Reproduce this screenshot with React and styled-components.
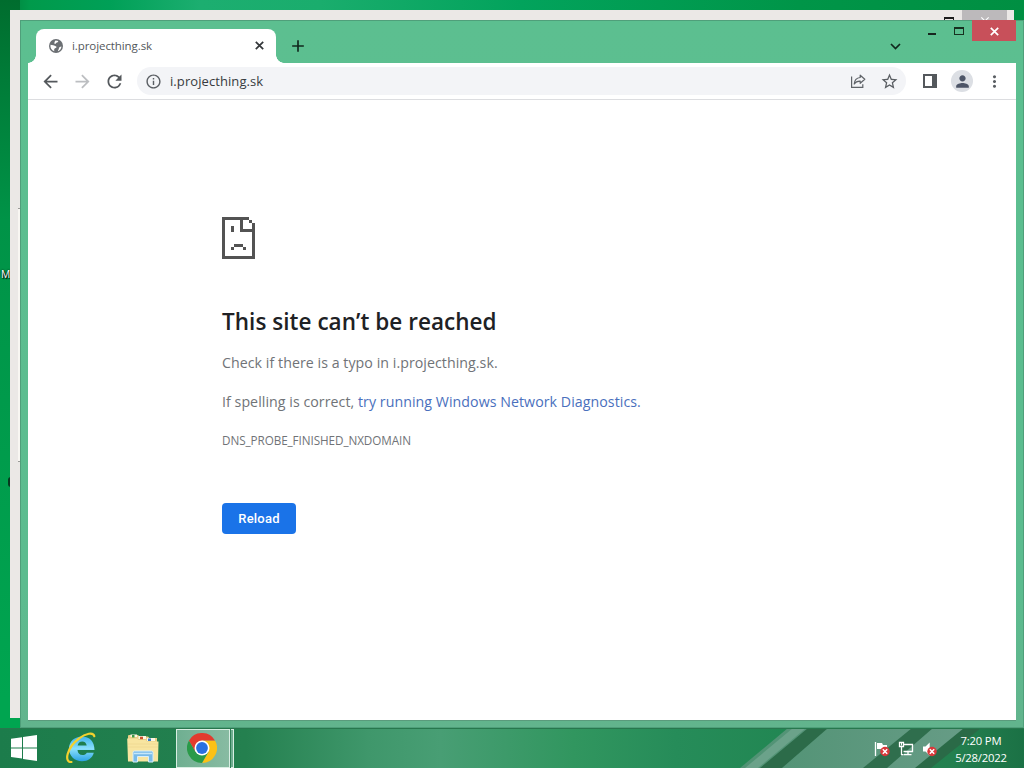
import React from "react";
import styled, { createGlobalStyle } from "styled-components";
import {
  MdAdd,
  MdArrowBack,
  MdArrowForward,
  MdClose,
  MdExpandMore,
  MdInfoOutline,
  MdMoreVert,
  MdPerson,
  MdRefresh,
  MdStarBorder,
} from "react-icons/md";

export default function App() {
  return (
    <Desktop>
      <GlobalStyle />
      <WorkArea>
        <IconLabel>M</IconLabel>
        <IconSpeck />
        <BackWindow>
          <BackMaximize />
          <BackClose>
            <MdClose size={14} />
          </BackClose>
          <BackEdge />
        </BackWindow>
        <BrowserWindow>
          <TitleBar>
            <Tab>
              <GlobeIcon />
              <TabTitle>i.projecthing.sk</TabTitle>
              <CloseIcon color="#33373a" />
            </Tab>
            <NewTab>
              <MdAdd size={20} />
            </NewTab>
            <TabSearch>
              <svg width="11" height="7" viewBox="0 0 11 7" fill="none">
                <path d="M1 1l4.500 4.500L10 1" stroke="#10281d" strokeWidth="1.700" />
              </svg>
            </TabSearch>
            <Caption>
              <Minimize />
              <Maximize />
              <CloseButton>
                <CloseIcon color="#fff" />
              </CloseButton>
            </Caption>
          </TitleBar>
          <Page>
            <Toolbar />
            <ErrorPage />
          </Page>
        </BrowserWindow>
      </WorkArea>
      <Taskbar />
    </Desktop>
  );
}

function CloseIcon({ color }) {
  return (
    <svg width="9" height="9" viewBox="0 0 9 9">
      <path d="M.8 .8l7.400 7.400M8.200 .8L.8 8.200" stroke={color} strokeWidth="1.700" />
    </svg>
  );
}

function GlobeIcon() {
  return (
    <svg width="14" height="14" viewBox="0 0 14 14">
      <circle cx="7" cy="7" r="7" fill="#6b6f73" />
      <path d="M1.500 5.800C3 6.300 5.500 6 7.200 7.600c.8.800-.2 1.600-1.400 1.900-.8.300-.6 1.400-.5 2.700C2.500 11.300 1 8.800 1.500 5.800z" fill="#fff" />
      <path d="M6.500 1.400c1 .2 2 .2 2.800.5-.2 1.200-1 1.400-1.900 1.900-.6.400-.6 1.200-1.500 1.100C5 4.700 5.300 2.600 6.500 1.400z" fill="#fff" />
      <path d="M12.500 7.500c-.3 2.300-1.500 4-3.600 4.700.1-1.300 1-1.600 1-2.600 0-1.200.8-2 2.600-2.100z" fill="#fff" />
    </svg>
  );
}

function Toolbar() {
  return (
    <ToolbarRow>
      <NavButton>
        <MdArrowBack size={21} />
      </NavButton>
      <NavButton $disabled>
        <MdArrowForward size={21} />
      </NavButton>
      <NavButton>
        <MdRefresh size={21} />
      </NavButton>
      <Omnibox>
        <MdInfoOutline size={17} color="#5a5e63" />
        <Url>i.projecthing.sk</Url>
        <ShareIcon />
        <MdStarBorder size={19} color="#5a5e63" />
      </Omnibox>
      <SidePanel />
      <Avatar>
        <MdPerson size={19} color="#4d5567" />
      </Avatar>
      <MdMoreVert size={19} color="#5a5e63" />
    </ToolbarRow>
  );
}

function ShareIcon() {
  return (
    <svg width="16" height="16" viewBox="0 0 16 16" fill="none" stroke="#5f6368" strokeWidth="1.200">
      <path d="M1.600 3.500v10.900h11.200v-3.200" />
      <path d="M10.200 2.200l4.600 4.100-4.600 4V8.100C7.600 8 5.500 8.900 4.200 11c.3-3.700 2.500-6.100 6-6.500z" strokeLinejoin="round" />
    </svg>
  );
}

function ErrorPage() {
  return (
    <ErrorBody>
      <SadPage />
      <Heading>This site can’t be reached</Heading>
      <Message>Check if there is a typo in i.projecthing.sk.</Message>
      <Message $gap={15}>
        If spelling is correct, <Link>try running Windows Network Diagnostics.</Link>
      </Message>
      <ErrorCode>DNS_PROBE_FINISHED_NXDOMAIN</ErrorCode>
      <Reload>Reload</Reload>
    </ErrorBody>
  );
}

function SadPage() {
  return (
    <svg width="33" height="42" viewBox="0 0 11 14" shapeRendering="crispEdges" fill="#535353">
      <path d="M0 0h9v1H7v3h4v10H0zM1 1v12h9V5H6V1z" fillRule="evenodd" />
      <path d="M9 1h1v1H9zM10 2h1v3h-1zM3 3h1v2H3zM4 9h3v1H4zM3 10h1v1H3zM7 10h1v1H7z" />
    </svg>
  );
}

function Taskbar() {
  return (
    <Bar>
      <BarBackdrop />
      <TaskItems>
        <StartSlot>
          <WindowsLogo />
        </StartSlot>
        <Slot>
          <ExplorerE />
        </Slot>
        <Slot>
          <Folder />
        </Slot>
        <ActiveSlot>
          <ChromeLogo />
        </ActiveSlot>
        <StackGap />
        <StackEdge />
      </TaskItems>
      <Tray>
        <FlagIcon />
        <NetworkIcon />
        <SpeakerIcon />
        <Clock>
          <ClockLine>7:20 PM</ClockLine>
          <ClockLine>5/28/2022</ClockLine>
        </Clock>
      </Tray>
    </Bar>
  );
}

function BarBackdrop() {
  return (
    <Backdrop width="1024" height="40" viewBox="0 0 1024 40">
      <defs>
        <linearGradient id="bar">
          <stop offset="0" stopColor="#1c7c4b" />
          <stop offset=".24" stopColor="#24804f" />
          <stop offset=".36" stopColor="#3f976b" />
          <stop offset=".43" stopColor="#489e74" />
          <stop offset=".56" stopColor="#31965f" />
          <stop offset=".66" stopColor="#268c59" />
          <stop offset=".78" stopColor="#218652" />
          <stop offset=".93" stopColor="#23804f" />
          <stop offset="1" stopColor="#1b7145" />
        </linearGradient>
        <linearGradient id="glass">
          <stop offset="0" stopColor="#4f9273" />
          <stop offset="1" stopColor="#679c86" />
        </linearGradient>
      </defs>
      <path d="M0 0h1024v40H0z" fill="url(#bar)" />
      <path d="M788 0h180l-48 40H740z" fill="url(#glass)" />
      <path d="M793 0h13l-48 40h-13z" fill="#6ba28a" />
      <path d="M808 0h20l-46 40h-22z" fill="#2c6b49" />
      <path d="M912 0h21l-46 40h-24z" fill="#2f6e4d" />
      <path d="M964 0h17l-50 40h-16z" fill="#2a6a47" />
      <path d="M0 .5h1024" stroke="#27774d" />
    </Backdrop>
  );
}

function WindowsLogo() {
  return (
    <svg width="26" height="26" viewBox="0 0 26 26" fill="#fff">
      <path d="M0 3.700L11 2.200v10.200H0zM12 2L26 0v12.400H12zM0 13.400h11v10.200L0 22zM12 13.400h14V26l-14-2.100z" />
    </svg>
  );
}

function ExplorerE() {
  return (
    <svg width="32" height="32" viewBox="0 0 32 32">
      <defs>
        <linearGradient id="ie" x1="0" y1="0" x2="0" y2="1">
          <stop offset="0" stopColor="#3fb4ec" />
          <stop offset=".5" stopColor="#8be0fb" />
          <stop offset="1" stopColor="#2ba3e4" />
        </linearGradient>
      </defs>
      <path
        d="M17 4.500c7.500 0 12.500 5 12.500 13.500H12.500c.3 3.200 2.200 5 5 5 2 0 3.500-.8 4.300-2.300h7c-1.600 5.500-5.700 8.500-11.800 8.500C9.500 29.200 4 24.300 4 16.600 4 9.400 9.700 4.500 17 4.500zM12.600 13.600h9.100c-.3-2.700-2-4.200-4.500-4.200s-4.200 1.500-4.600 4.200z"
        fill="url(#ie)"
      />
      <path
        d="M6.500 30C-1.500 30.500 2 15.500 14 6.500 20.500 1.200 28.500-.2 29.300 4.200"
        fill="none"
        stroke="#f3d12d"
        strokeWidth="2.200"
        strokeLinecap="round"
      />
    </svg>
  );
}

function Folder() {
  return (
    <svg width="34" height="30" viewBox="0 0 34 30">
      <path d="M2 3Q2 2 3 2h9l1.500 1.500H22L23.500 5H31v4H2z" fill="#e9cf86" />
      <path d="M4.500 1.500H11V4H4.500zM12.500 3H20v3h-7.500zM21 5h8v3h-8z" fill="#fbf6e4" />
      <path d="M6 2h2.500v2.500H6z" fill="#3e9a44" />
      <path d="M14 3.700h3v2.500h-3z" fill="#c8502e" />
      <path d="M22 5.500h3V8h-3z" fill="#397fc8" />
      <path d="M1.200 5.500h10l1.500 1.500h7L21 8.500h11.500L32 28.500H2z" fill="#f8e5a0" />
      <path d="M2 11h30M2 14h30" stroke="#f0da93" />
      <path d="M7 29v-9.500Q7 18 8.500 18h17q1.500 0 1.500 1.500V29h-4.500v-5.500h-11V29z" fill="#79bbe8" stroke="#d9effa" />
      <path d="M8 20.500h18" stroke="#c6e7fa" strokeWidth="1.500" />
    </svg>
  );
}

function ChromeLogo() {
  return (
    <svg width="30" height="30" viewBox="0 0 30 30">
      <path d="M15 7.500h13A15 15 0 0 1 15 30l6.500-11.250z" fill="#fbc116" />
      <path d="M2 7.500L8.500 18.750h13L15 30A15 15 0 0 1 2 7.500z" fill="#2a9a49" />
      <path d="M15 7.500h13a15 15 0 0 0-26 0l6.500 11.250z" fill="#e23b2e" />
      <circle cx="15" cy="15" r="7.500" fill="#fff" />
      <circle cx="15" cy="15" r="5.900" fill="#2a70e0" />
    </svg>
  );
}

function ErrorBadge({ x, y }) {
  return (
    <g transform={`translate(${x} ${y})`}>
      <circle r="4.700" fill="#d9383a" />
      <path d="M-2.200-2.200l4.400 4.400M2.200-2.200l-4.400 4.400" stroke="#fff" strokeWidth="1.500" />
    </g>
  );
}

function FlagIcon() {
  return (
    <svg width="16" height="16" viewBox="0 0 16 16">
      <path d="M1.500 1v14" stroke="#fff" strokeWidth="1.300" />
      <path d="M3 2h5l1 2h4v5.500H8L7 8H3z" fill="#fff" />
      <ErrorBadge x={11} y={10.500} />
    </svg>
  );
}

function NetworkIcon() {
  return (
    <svg width="16" height="16" viewBox="0 0 16 16" fill="none" stroke="#fff" strokeWidth="1.300">
      <path d="M5.500 3.500h9v7h-9M10 10.500v3M6 13.700h7.500" />
      <path d="M1.500 1.500h4v4h-4zM3.500 5.500v8.200h2" />
      <path d="M3.500 1.500v3" strokeWidth="1" />
    </svg>
  );
}

function SpeakerIcon() {
  return (
    <svg width="16" height="16" viewBox="0 0 16 16">
      <path d="M1 5.500h2.500L7.700 1.500v13L3.500 10.500H1z" fill="#fff" />
      <ErrorBadge x={10} y={10.500} />
    </svg>
  );
}

const GlobalStyle = createGlobalStyle`
  body {
    margin: 0;
    overflow: hidden;
  }
`;

const Desktop = styled.div`
  width: 1024px;
  height: 768px;
  display: flex;
  flex-direction: column;
  overflow: hidden;
  font-family: "Open Sans", "Noto Sans", sans-serif;
  background: linear-gradient(90deg, #007a38 0, #009a4b 30px, #00a057 110px, #1cae70 200px, #1aad6d 320px, #02a35c 520px, #009548 800px, #008f42 1024px);
`;

const WorkArea = styled.div`
  position: relative;
  flex: 1;
`;

const IconLabel = styled.span`
  position: absolute;
  left: 0;
  top: 0;
  height: 728px;
  width: 20px;
  box-sizing: border-box;
  padding: 266px 0 0 1px;
  font-size: 10.300px;
  line-height: 16px;
  color: #fff;
  text-shadow: 1px 1px 1px #000, 0 0 2px #000;
  background: linear-gradient(#006d2e 0, #007c38 80px, #009347 220px, #009a4b 400px, #00a550 698px);
`;

const IconSpeck = styled.div`
  position: absolute;
  left: 8px;
  top: 477px;
  width: 3px;
  height: 10px;
  border-radius: 3px 0 0 3px;
  background: #07391f;
`;

const BackWindow = styled.div`
  position: absolute;
  left: 10px;
  top: 10px;
  width: 1004px;
  height: 708px;
  background: #ebe8e6;
`;

const BackMaximize = styled.div`
  position: absolute;
  left: 934px;
  top: 7px;
  width: 10px;
  height: 8px;
  box-sizing: border-box;
  border: 1px solid #1d1d1d;
  border-top-width: 2px;
`;

const BackClose = styled.div`
  position: absolute;
  left: 952px;
  top: 0;
  width: 45px;
  height: 21px;
  display: flex;
  align-items: center;
  justify-content: center;
  color: #fff;
  background: #bcb9bb;
`;

const BackEdge = styled.div`
  position: absolute;
  left: 8px;
  top: 198px;
  width: 2px;
  height: 252px;
  border: solid #9b9b98;
  border-width: 1px 0;
  background: #f8f6f2;
`;

const BrowserWindow = styled.div`
  position: absolute;
  left: 20px;
  top: 20px;
  width: 1004px;
  height: 708px;
  box-sizing: border-box;
  display: flex;
  flex-direction: column;
  padding: 0 8px 8px;
  background: linear-gradient(#5cbf90 0, #5cbc8f 80%, #62b48d 100%);
  box-shadow: inset 1px 1px 0 #4f9f7a, inset -1px -1px 0 #4f9f7a;
`;

const TitleBar = styled.div`
  height: 43px;
  flex: none;
  display: flex;
  padding-left: 8px;
`;

const Tab = styled.div`
  position: relative;
  width: 240px;
  height: 34px;
  margin-top: 9px;
  box-sizing: border-box;
  display: flex;
  align-items: center;
  padding: 0 12px 1px 13px;
  border-radius: 8px 8px 0 0;
  background: #fff;

  &::before,
  &::after {
    content: "";
    position: absolute;
    bottom: 0;
    width: 8px;
    height: 8px;
  }
  &::before {
    left: -8px;
    background: radial-gradient(circle at 0 0, transparent 7.500px, #fff 8px);
  }
  &::after {
    right: -8px;
    background: radial-gradient(circle at 100% 0, transparent 7.500px, #fff 8px);
  }
`;

const TabTitle = styled.span`
  flex: 1;
  margin-left: 9px;
  font-size: 11.500px;
  letter-spacing: -0.080px;
  color: #53575b;
`;

const NewTab = styled.div`
  display: flex;
  align-items: center;
  margin: 9px 0 0 12px;
  color: #10281d;
`;

const TabSearch = styled.div`
  display: flex;
  align-items: center;
  margin: 9px 27px 0 auto;
`;

const Caption = styled.div`
  display: flex;
  align-items: flex-start;
`;

const Minimize = styled.div`
  width: 8px;
  height: 2px;
  margin-top: 13px;
  background: #17261f;
`;

const Maximize = styled.div`
  width: 10px;
  height: 8px;
  box-sizing: border-box;
  margin: 7px 8px 0 18px;
  border: 1px solid #17301f;
  border-top-width: 2px;
`;

const CloseButton = styled.div`
  width: 44px;
  height: 21px;
  box-sizing: border-box;
  display: flex;
  align-items: center;
  justify-content: center;
  padding: 2px 0 0 1px;
  background: #c8505a;
`;

const Page = styled.div`
  flex: 1;
  background: #fff;
  box-shadow: 0 1px 0 #5a9b7c;
`;

const ToolbarRow = styled.div`
  height: 37px;
  box-sizing: border-box;
  display: flex;
  align-items: center;
  padding: 0 12px 0 6px;
  border-bottom: 1px solid #dcdde0;
`;

const NavButton = styled.div`
  width: 32px;
  box-sizing: border-box;
  display: flex;
  justify-content: center;
  color: ${(p) => (p.$disabled ? "#bcbec1" : "#54585c")};
`;

const Omnibox = styled.div`
  flex: 1;
  height: 28px;
  box-sizing: border-box;
  display: flex;
  align-items: center;
  margin-left: 7px;
  padding: 0 7px 0 8px;
  border-radius: 14px;
  background: #f3f4f7;

  svg:last-child {
    margin-left: 14px;
  }
`;

const Url = styled.span`
  flex: 1;
  margin-left: 8px;
  font-size: 13px;
  letter-spacing: 0.080px;
  color: #383b40;
`;

const SidePanel = styled.div`
  width: 14px;
  height: 14px;
  box-sizing: border-box;
  margin: 0 14px 0 17px;
  border: solid #54585c;
  border-width: 2px 5px 2px 2px;
`;

const Avatar = styled.div`
  width: 22px;
  height: 22px;
  display: flex;
  align-items: center;
  justify-content: center;
  margin-right: 12px;
  border-radius: 50%;
  background: #dcdfe4;
`;

const ErrorBody = styled.div`
  padding: 117px 0 0 194px;

  svg {
    display: block;
  }
`;

const Heading = styled.h1`
  margin: 48px 0 0;
  font-size: 22.500px;
  font-weight: 600;
  line-height: 30px;
  letter-spacing: 0.040px;
  color: #202124;
`;

const Message = styled.p`
  margin: ${(p) => p.$gap || 14}px 0 0;
  font-size: 14.200px;
  line-height: 24px;
  letter-spacing: 0.050px;
  color: #707377;
`;

const Link = styled.span`
  color: #4a70bd;
`;

const ErrorCode = styled.div`
  margin-top: 17px;
  font-size: 11.700px;
  line-height: 18px;
  letter-spacing: -0.070px;
  color: #707377;
`;

const Reload = styled.button`
  display: block;
  width: 74px;
  height: 31px;
  margin-top: 54px;
  padding: 0;
  border: 0;
  border-radius: 4px;
  font: 500 13px Roboto, sans-serif;
  letter-spacing: 0.200px;
  color: #fff;
  background: #1a73e8;
`;

const Bar = styled.div`
  position: relative;
  height: 40px;
  flex: none;
  display: flex;
  justify-content: space-between;
`;

const Backdrop = styled.svg`
  position: absolute;
  left: 0;
  top: 0;
`;

const TaskItems = styled.div`
  position: relative;
  display: flex;
  align-items: center;
`;

const StartSlot = styled.div`
  display: flex;
  width: 50px;
  padding-left: 11px;
  box-sizing: border-box;
`;

const Slot = styled.div`
  width: 62px;
  display: flex;
  justify-content: center;
`;

const ActiveSlot = styled.div`
  width: 54px;
  height: 39px;
  box-sizing: border-box;
  display: flex;
  align-items: center;
  justify-content: center;
  margin-left: 2px;
  padding-right: 2px;
  border: 1px solid #d9eee3;
  background: linear-gradient(90deg, #6faf91, #88bba2);
`;

const StackGap = styled.div`
  width: 1px;
  height: 39px;
  background: #2f7f56;
`;

const StackEdge = styled.div`
  width: 3px;
  height: 39px;
  box-sizing: border-box;
  border: 1px solid #d9eee3;
  border-left: 0;
  background: #6fae91;
`;

const Tray = styled.div`
  position: relative;
  display: flex;
  align-items: center;
  gap: 8px;
  padding: 1px 12px 0 0;
`;

const Clock = styled.div`
  width: 62px;
  margin-left: 4px;
  text-align: center;
`;

const ClockLine = styled.div`
  font-size: 11.300px;
  line-height: 17px;
  letter-spacing: -0.200px;
  color: #fff;
`;
